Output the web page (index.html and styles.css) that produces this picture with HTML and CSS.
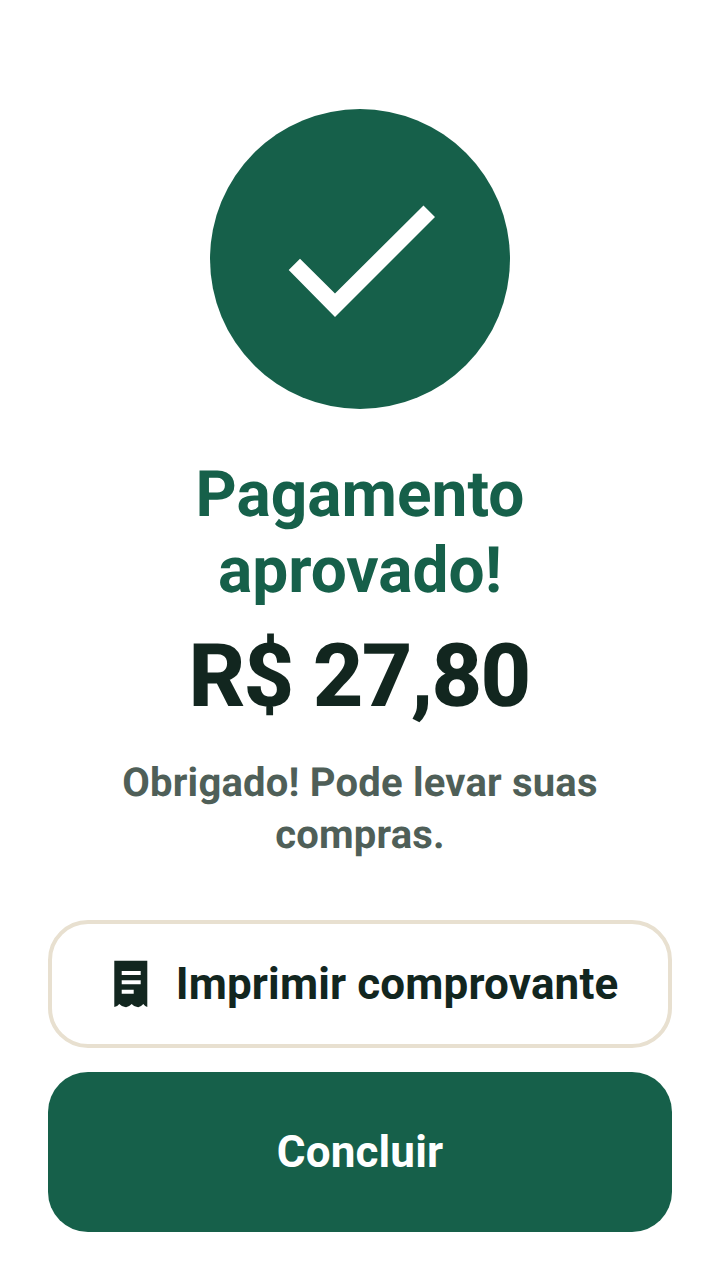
FILE: index.html
```html
<!DOCTYPE html>
<html lang="pt-BR">

<head>
    <meta charset="UTF-8">
    <meta name="viewport" content="width=device-width, initial-scale=1.0">
    <title>Pagamento aprovado</title>
    <link rel="stylesheet" href="styles.css">
</head>

<body>
    <main class="screen">
        <div class="status-circle">
            <svg class="check-icon" width="300" height="300" viewBox="210 109 300 300">
                <polygon points="288.7,270 300,258.7 335,293.5 423.5,205.5 435,217 335,317" fill="#ffffff" />
            </svg>
        </div>

        <h1 class="title">Pagamento aprovado!</h1>
        <div class="amount">R$ 27,80</div>
        <p class="message">Obrigado! Pode levar suas compras.</p>

        <div class="actions">
            <button class="btn btn-outline">
                <svg class="receipt-icon" width="34" height="48" viewBox="114 960 34 48">
                    <path fill="#12261f" fill-rule="evenodd"
                        d="M114.3 960.7H147.3V1007Q145 1006.5 143.3 1004Q140 1007.8 137.3 1007Q134 1006.8 131.7 1004Q128 1007.8 125 1007Q122 1006.8 119.3 1004Q117.5 1006.5 114.3 1007ZM121.7 971V975H140.7V971ZM121.7 980.3V984.3H140.7V980.3ZM121.7 989.7V993.7H133.7V989.7Z" />
                </svg>
                Imprimir comprovante
            </button>
            <button class="btn btn-primary">Concluir</button>
        </div>
    </main>
</body>

</html>
```

FILE: styles.css
```css
body,
html {
    margin: 0;
    padding: 0;
    height: 100%;
    font-family: Roboto, 'Liberation Sans', sans-serif;
    background-color: #ffffff;
    overflow: hidden;
    text-rendering: geometricPrecision;
}

.screen {
    box-sizing: border-box;
    height: 100%;
    padding: 109px 48px 48px;
    display: flex;
    flex-direction: column;
    align-items: center;
    text-align: center;
}

.status-circle {
    width: 300px;
    height: 300px;
    border-radius: 50%;
    background-color: #16604a;
    flex-shrink: 0;
}

.check-icon {
    display: block;
}

.title {
    margin: 48px 0 0;
    width: 400px;
    font-size: 64px;
    line-height: 76px;
    font-weight: 700;
    color: #16604a;
}

.amount {
    margin: 16px 2px 0 0;
    font-size: 88px;
    line-height: 104px;
    font-weight: 800;
    letter-spacing: -1.76px;
    color: #12261f;
}

.message {
    margin: 28px 0 0;
    width: 560px;
    font-size: 40px;
    line-height: 52px;
    font-weight: 700;
    letter-spacing: 0.2px;
    color: #4f5f58;
}

.actions {
    margin-top: auto;
    width: 100%;
    display: flex;
    flex-direction: column;
    gap: 24px;
}

.btn {
    width: 100%;
    display: flex;
    align-items: center;
    justify-content: center;
    font-family: inherit;
    font-weight: 700;
    font-size: 44px;
    letter-spacing: 0.15px;
    border-radius: 40px;
    cursor: pointer;
}

.btn-outline {
    height: 128px;
    gap: 28px;
    padding: 0 0 0 12px;
    background-color: #ffffff;
    border: 4px solid #e8e0d0;
    color: #12261f;
}

.btn-primary {
    height: 160px;
    background-color: #16604a;
    border: none;
    color: #ffffff;
}
```
